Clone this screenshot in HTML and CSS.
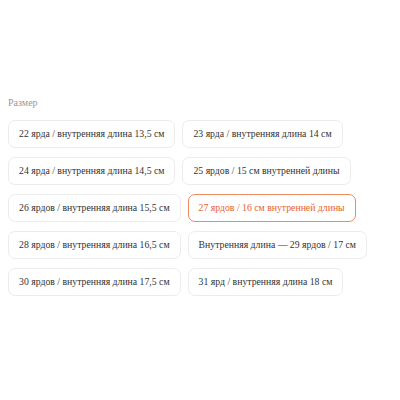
FILE: index.html
```html
<!DOCTYPE html>
<html>
<head>
<meta charset="utf-8">
<link rel="stylesheet" href="styles.css">
</head>
<body>
<div class="picker">
  <div class="label">Размер</div>
  <div class="options">
    <div class="opt">22 ярда / внутренняя длина 13,5 см</div>
    <div class="opt">23 ярда / внутренняя длина 14 см</div>
    <div class="opt">24 ярда / внутренняя длина 14,5 см</div>
    <div class="opt">25 ярдов / 15 см внутренней длины</div>
    <div class="opt">26 ярдов / внутренняя длина 15,5 см</div>
    <div class="opt selected">27 ярдов / 16 см внутренней длины</div>
    <div class="opt">28 ярдов / внутренняя длина 16,5 см</div>
    <div class="opt">Внутренняя длина — 29 ярдов / 17 см</div>
    <div class="opt">30 ярдов / внутренняя длина 17,5 см</div>
    <div class="opt">31 ярд / внутренняя длина 18 см</div>
  </div>
</div>
</body>
</html>
```
FILE: styles.css
```css
body {
  margin: 0;
  background: #fff;
  font-family: "Liberation Serif", serif;
}
.picker {
  padding: 96px 8px 0 8px;
  width: 370px;
}
.label {
  font-size: 10px;
  color: #999;
  line-height: 14px;
  margin-bottom: 10px;
}
.options {
  display: flex;
  flex-wrap: wrap;
  gap: 9px 7px;
}
.opt {
  font-size: 9.75px;
  line-height: 12px;
  color: #333;
  padding: 7px 10px;
  border: 1px solid #ececec;
  border-radius: 7px;
  white-space: nowrap;
}
.opt.selected {
  border-color: #ec8a62;
  color: #e8632f;
}
```
